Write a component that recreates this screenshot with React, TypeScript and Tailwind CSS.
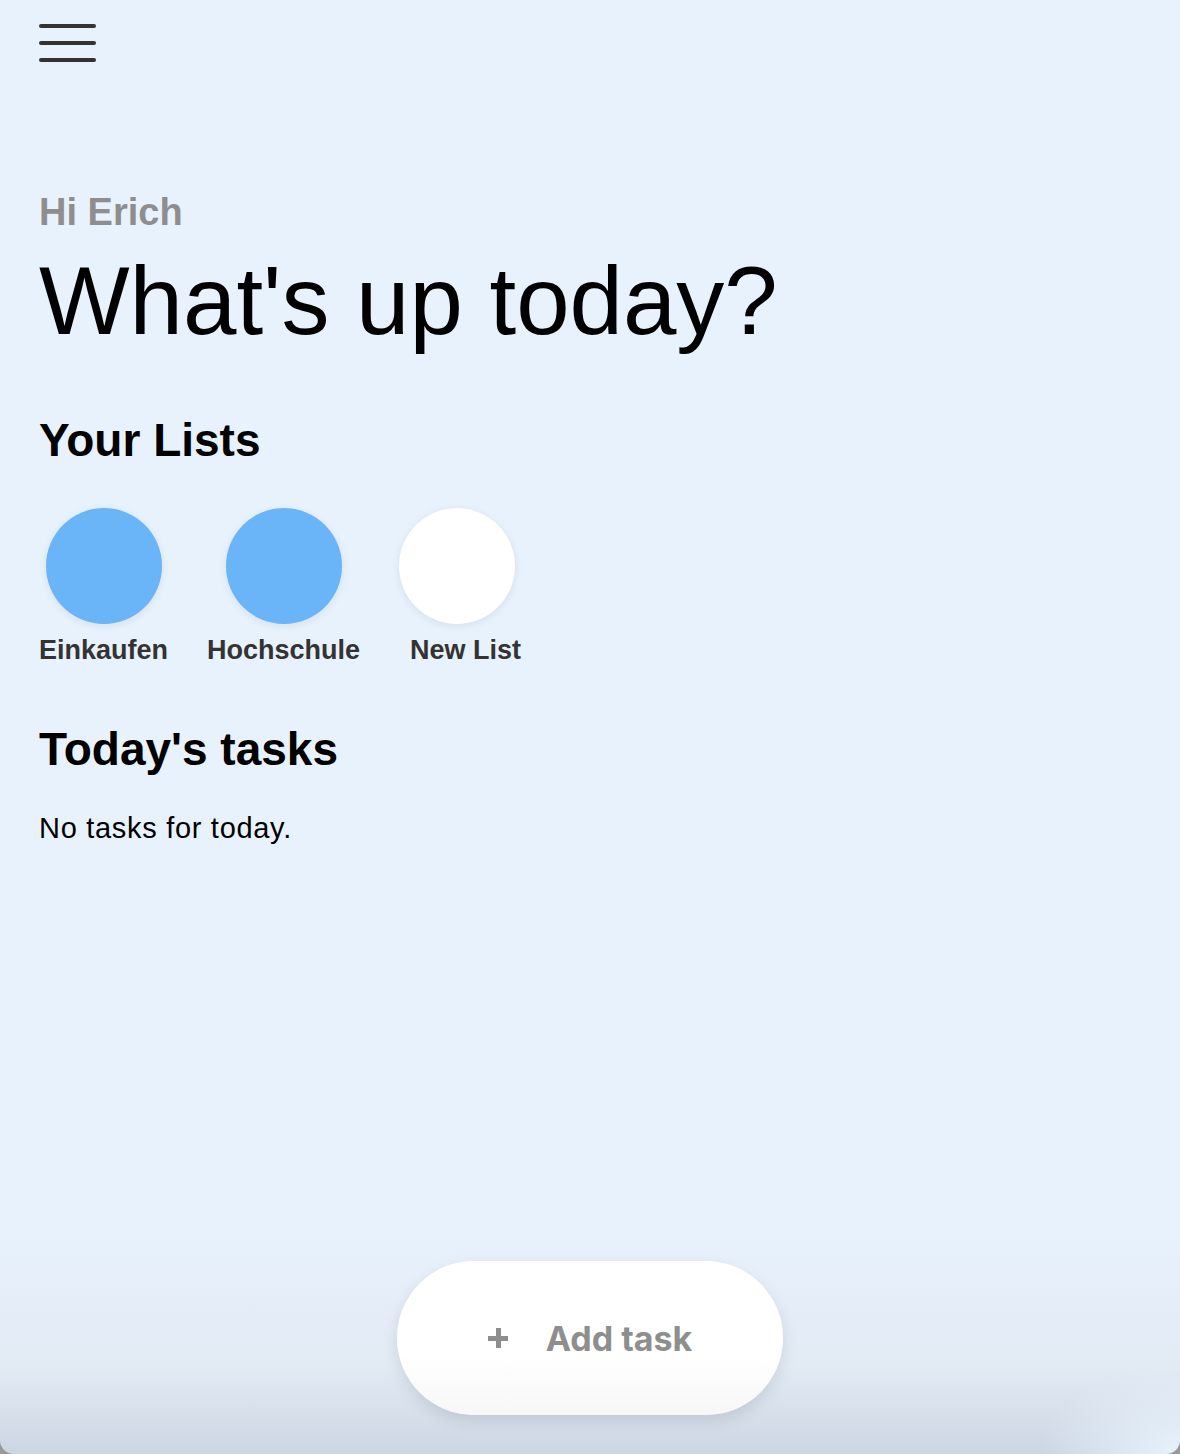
import React from "react";

const lists = [
  { name: "Einkaufen", color: "bg-[#6ab4f8]" },
  { name: "Hochschule", color: "bg-[#6ab4f8]" },
];

const MenuIcon = () => (
  <button className="flex flex-col gap-[13px] w-[57px] py-[1px]">
    <span className="block h-[4px] w-full rounded-full bg-[#333]" />
    <span className="block h-[4px] w-full rounded-full bg-[#333]" />
    <span className="block h-[4px] w-full rounded-full bg-[#333]" />
  </button>
);

export default function App() {
  return (
    <div className="w-full h-[1454px] bg-[#9a9a9a]">
      <div
        className="h-full flex flex-col px-[39px] rounded-b-[14px] bg-[radial-gradient(ellipse_140px_90px_at_100%_100%,#e8f2fd_0%,rgba(232,242,253,0)_100%),linear-gradient(to_bottom,#e8f2fd_0%,#e8f2fd_84%,#e2eaf4_94%,#ccd6e2_100%)]"
        style={{ fontFamily: '"Liberation Sans", Arial, sans-serif' }}
      >
        <div className="pt-[23px]">
          <MenuIcon />
        </div>

        <p className="mt-[130px] text-[38px] leading-[38px] font-bold text-[#8e8e8e]">Hi Erich</p>
        <h1 className="mt-[22px] text-[96px] leading-[96px] text-black">What's up today?</h1>

        <h2 className="mt-[68px] text-[46px] leading-[46px] font-bold text-black">Your Lists</h2>
        <div className="mt-[45px] flex gap-[39px]">
          {lists.map((l) => (
            <div key={l.name} className="flex flex-col items-center">
              <div className={`w-[116px] h-[116px] rounded-full ${l.color} shadow-[0_2px_8px_rgba(0,0,0,0.08)]`} />
              <span className="mt-[13px] text-[27px] leading-[27px] font-bold text-[#333]">{l.name}</span>
            </div>
          ))}
          <div className="flex flex-col items-start">
            <div className="w-[116px] h-[116px] rounded-full bg-white shadow-[0_2px_8px_rgba(0,0,0,0.08)]" />
            <span className="mt-[13px] ml-[11px] text-[27px] leading-[27px] font-bold text-[#333]">New List</span>
          </div>
        </div>

        <h2 className="mt-[62px] text-[46px] leading-[46px] font-bold text-black">Today's tasks</h2>
        <p className="mt-[42px] text-[29px] leading-[29px] tracking-[0.7px] text-black">No tasks for today.</p>

        <div className="mt-auto mb-[39px] flex justify-center">
          <button
            className="w-[386px] h-[154px] rounded-full bg-[linear-gradient(to_bottom,#ffffff_60%,#f7f7f7_100%)] shadow-[0_6px_16px_rgba(0,0,0,0.1)] flex items-center justify-center gap-[38px] text-[#8e8e8e]"
            style={{ fontFamily: "Inter, sans-serif" }}
          >
            <span className="relative block w-[20px] h-[20px]">
              <span className="absolute left-0 top-[8px] w-[20px] h-[5px] bg-[#8e8e8e]" />
              <span className="absolute left-[8px] top-0 w-[5px] h-[20px] bg-[#8e8e8e]" />
            </span>
            <span className="text-[34px] font-bold">Add task</span>
          </button>
        </div>
      </div>
    </div>
  );
}
